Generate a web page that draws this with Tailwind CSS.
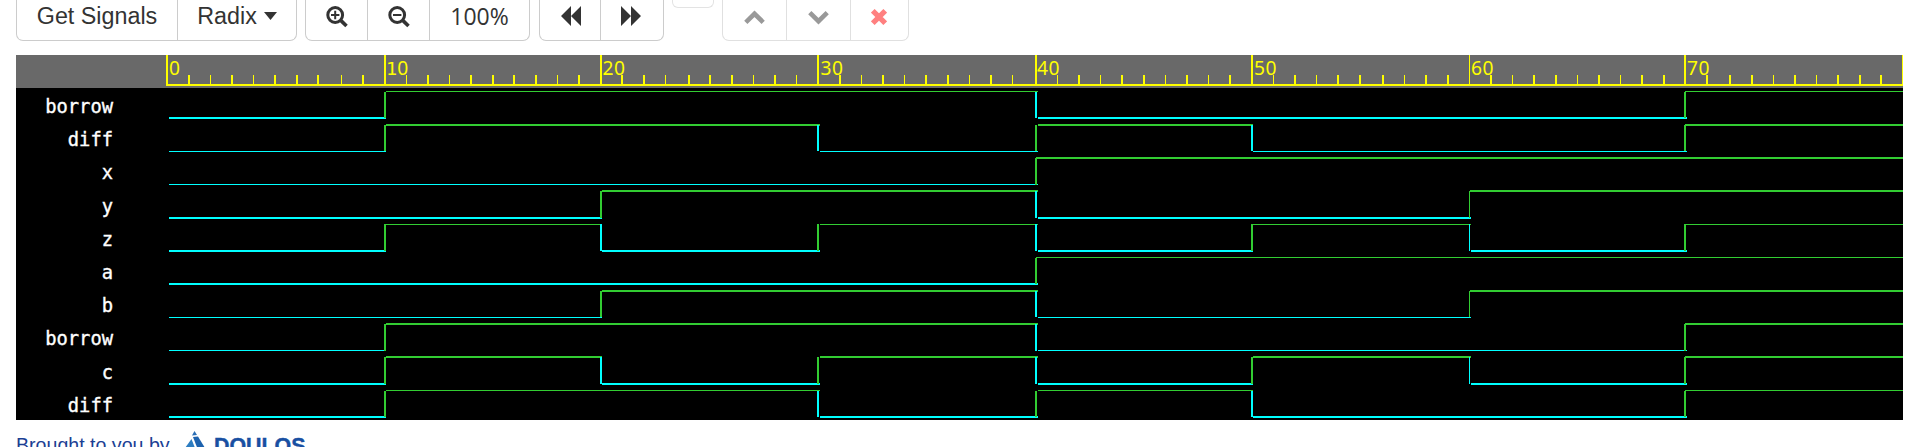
<!DOCTYPE html>
<html lang="en">
<head>
<meta charset="utf-8">
<title>Waveform viewer</title>
<script src="https://cdn.jsdelivr.net/npm/@tailwindcss/browser@4"></script>
</head>
<body class="bg-white w-[1918px] h-[447px] overflow-hidden text-[#333] font-['Liberation_Sans',Arial,sans-serif]">
<header class="flex items-start h-[55px] text-[23.3px] leading-[32px]">
  <div class="ml-4 flex w-[281px] h-[41px] border border-t-0 border-[#ccc] rounded-b-[7px]">
    <button class="w-[161px] h-full pb-[8px] border-r border-[#ccc] whitespace-nowrap">Get Signals</button>
    <button class="flex-1 h-full pb-[8px] flex items-center justify-center gap-[7px]">Radix
      <svg class="w-[13px] h-[8px]" viewBox="0 0 13 8"><path d="M0 0H13L6.5 8Z" fill="#333"/></svg></button>
  </div>
  <div class="ml-2 flex w-[225px] h-[41px] border border-t-0 border-[#ccc] rounded-b-[7px]">
    <button class="w-[62px] h-full pt-[6px] pl-[20px] border-r border-[#ccc]">
      <svg class="w-[22px] h-[22px] mb-[13px]" viewBox="0 0 22 22" fill="none" stroke="#333"><circle cx="9.2" cy="9" r="7.4" stroke-width="3"/><path d="M15 14.6L20.5 20" stroke-width="3.6"/><path d="M5 9H13.4M9.2 4.8V13.2" stroke-width="2"/></svg></button>
    <button class="w-[62px] h-full pt-[6px] pl-[20px] border-r border-[#ccc]">
      <svg class="w-[22px] h-[22px] mb-[13px]" viewBox="0 0 22 22" fill="none" stroke="#333"><circle cx="9.2" cy="9" r="7.4" stroke-width="3"/><path d="M15 14.6L20.5 20" stroke-width="3.6"/><path d="M5 9H13.4" stroke-width="2"/></svg></button>
    <button class="flex-1 h-full pb-[8px] text-[23px] tracking-[0px] font-['Open_Sans',sans-serif]">100%</button>
  </div>
  <div class="ml-[9px] flex w-[125px] h-[41px] border border-t-0 border-[#ccc] rounded-b-[7px]">
    <button class="w-[61px] h-full pt-[6px] pl-[21px] border-r border-[#ccc]"><svg class="w-[20px] h-[20px] mb-[15px]" viewBox="0 0 20 20"><path d="M0 10L10 0V20ZM10 10L20 0V20Z" fill="#333"/></svg></button>
    <button class="flex-1 h-full pt-[6px] pl-[20px]"><svg class="w-[20px] h-[20px] mb-[15px]" viewBox="0 0 20 20"><path d="M0 0L10 10L0 20ZM10 0L20 10L10 20Z" fill="#333"/></svg></button>
  </div>
  <div class="ml-2 w-[42px] h-[8px] border border-t-0 border-[#e3e3e3] rounded-b-[6px]"></div>
  <div class="ml-2 flex w-[187px] h-[41px] border border-t-0 border-[#e0e0e0] rounded-b-[7px]">
    <button class="w-[64px] h-full pt-[10px] pl-[21px] border-r border-[#e0e0e0]"><svg class="w-[21px] h-[15px] mb-[16px]" viewBox="0 0 21 15" fill="none" stroke="#999" stroke-width="4.6"><path d="M1.8 12.3L10.5 3.8L19.2 12.3"/></svg></button>
    <button class="w-[64px] h-full pt-[10px] pl-[21px] border-r border-[#e0e0e0]"><svg class="w-[21px] h-[15px] mb-[16px]" viewBox="0 0 21 15" fill="none" stroke="#999" stroke-width="4.6"><path d="M1.8 2.7L10.5 11.2L19.2 2.7"/></svg></button>
    <button class="flex-1 h-full pt-[9px] pl-[20px]"><svg class="w-[16px] h-[16px] mb-[16px]" viewBox="0 0 16 16" fill="none" stroke="#ff8080" stroke-width="5.2"><path d="M1.8 1.8L14.2 14.2M14.2 1.8L1.8 14.2"/></svg></button>
  </div>
</header>

<main class="ml-4 w-[1887px] h-[365px] bg-black flex flex-col overflow-hidden">
  <div class="h-[33px] shrink-0 bg-[#696969]">
    <svg id="ruler" class="block w-[1887px] h-[33px]" viewBox="16 55 1887 33" fill="#ff0" font-family="'Noto Sans',sans-serif" font-size="19.2" letter-spacing="0.4"></svg>
  </div>
  <div class="flex h-[332px]">
    <div class="w-[97px] shrink-0 pt-[2px] text-right text-white text-[18.8px] leading-[33.2px] font-['DejaVu_Sans_Mono',monospace] [-webkit-text-stroke:0.35px_white]">
      <div>borrow</div><div>diff</div><div>x</div><div>y</div><div>z</div><div>a</div><div>b</div><div>borrow</div><div>c</div><div>diff</div>
    </div>
    <svg id="waves" class="block w-[1790px] h-[332px]" viewBox="113 88 1790 332" shape-rendering="crispEdges"></svg>
  </div>
</main>

<footer class="ml-4 h-[27px] flex items-start">
  <span class="mt-[14px] w-[155px] text-[19.6px] leading-[22px] whitespace-nowrap text-[#1c3f94]">Brought to you by</span>
  <svg class="ml-[14px] mt-[11px] w-[20px] h-[24px]" viewBox="0 0 20 24"><path d="M9.5 0L12 4L7 4.5Z" fill="#2a6eb5"/><path d="M8 6L13 5.5L20 17V24H15Z" fill="#1d62ae"/><path d="M6.5 8L10 17H0Z" fill="#2d7dc1"/></svg>
  <span class="ml-[9px] mt-[14px] text-[21.4px] leading-[24px] font-bold text-[#184fa2] [-webkit-text-stroke:0.4px_#184fa2]">DOULOS</span>
</footer>

<script>
const NS = 'http://www.w3.org/2000/svg';
function rect(svg, x0, y0, x1, y1, fill) {
  const r = document.createElementNS(NS, 'rect');
  r.setAttribute('x', x0); r.setAttribute('y', y0);
  r.setAttribute('width', x1 - x0); r.setAttribute('height', y1 - y0);
  if (fill) r.setAttribute('fill', fill);
  svg.appendChild(r);
}
const ruler = document.getElementById('ruler');
const waves = document.getElementById('waves');

// Ruler: baseline, major ticks with labels, minor ticks
rect(ruler, 166, 84, 1903, 86);
const major = [166, 384, 600, 817, 1035, 1251, 1469, 1684, 1902];
const labelX = [169, 386, 602.5, 820.5, 1037, 1254, 1471, 1687];
major.forEach((x, i) => {
  rect(ruler, x, 55, x + (i === 6 || i === 8 ? 1 : 2), 85);
  if (i === 8) return;
  const t = document.createElementNS(NS, 'text');
  t.setAttribute('x', labelX[i]);
  t.setAttribute('y', 75);
  if (i === 1) {
    t.innerHTML = '<tspan font-family="DejaVu Sans Mono" font-size="18.5" x="386">1</tspan><tspan x="397.3">0</tspan>';
  } else t.textContent = String(i * 10);
  ruler.appendChild(t);
});
const wide = [188,231,274,296,317,362,427,470,492,513,535,578,621,643,688,709,731,774,839,882,925,947,990,
  1078,1121,1143,1186,1229,1294,1337,1359,1382,1425,1447,1490,1533,1555,1598,1641,1663,1706,1729,1751,1794,1837,1859,1880];
const thin = [210,253,341,406,449,557,665,753,796,861,904,969,1012,1057,1100,1165,1208,1273,1316,1404,1512,1577,1620,1773,1816];
wide.forEach(x => rect(ruler, x, 75, x + 2, 84));
thin.forEach(x => rect(ruler, x, 75, x + 1, 84));

// Signals: [high y, high thickness, low y, low thickness, edge top, edge bottom, value per 10 time units]
const signals = [
  [91, 1, 117, 2, 92, 118, '01110001'],
  [124, 2, 151, 1, 125, 151, '01101001'],
  [157, 2, 184, 1, 158, 185, '00001111'],
  [190, 2, 217, 2, 191, 218, '00110011'],
  [224, 1, 250, 2, 224, 251, '01010101'],
  [257, 1, 283, 2, 258, 284, '00001111'],
  [290, 2, 317, 1, 291, 317, '00110011'],
  [323, 2, 350, 1, 324, 351, '01110001'],
  [356, 2, 383, 2, 357, 384, '01010101'],
  [390, 1, 416, 2, 391, 417, '01101001'],
];
const HI = '#32cd32', LO = '#00ffff';
const joint = [169, 386, 602, 820, 1038, 1253, 1471, 1687, 1903];
for (const [hy, ht, ly, lt, top, bottom, bits] of signals) {
  for (let i = 0; i < 8; ) {
    let j = i;
    while (j < 8 && bits[j] === bits[i]) j++;
    const up = bits[i] === '1';
    const toEnd = up && j === 8 && i > 0;
    const start = toEnd ? major[i] + 1 : joint[i];
    rect(waves, start, up ? hy : ly, joint[j], up ? hy + ht : ly + lt, up ? HI : LO);
    i = j;
  }
  for (let i = 1; i < 8; i++) {
    if (bits[i] !== bits[i - 1])
      rect(waves, major[i], top, major[i] + (i === 6 ? 1 : 2), bottom, bits[i] === '1' ? HI : LO);
  }
}
</script>
</body>
</html>
